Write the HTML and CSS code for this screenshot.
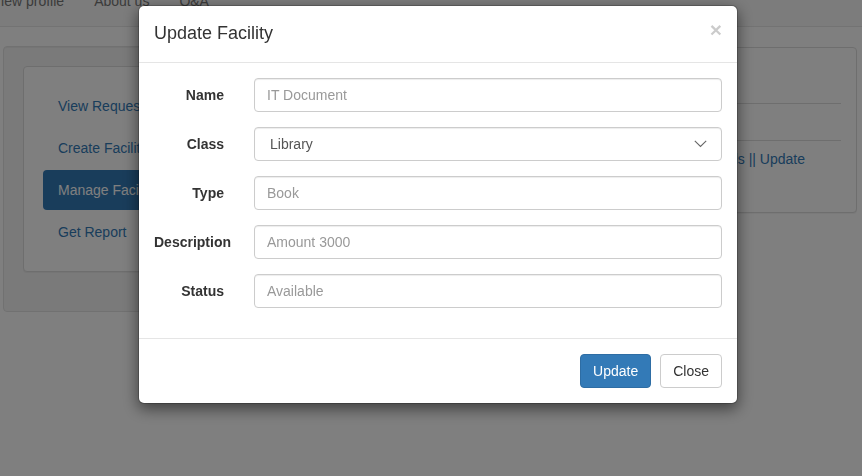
FILE: index.html
```html
<!DOCTYPE html>
<html lang="en">
<head>
<meta charset="utf-8">
<title>Manage Facility</title>
<link rel="stylesheet" href="styles.css">
</head>
<body>
<nav class="navbar">
  <ul class="nav-links">
    <li><a href="#">View profile</a></li>
    <li><a href="#">About us</a></li>
    <li><a href="#">Q&amp;A</a></li>
  </ul>
</nav>

<main class="layout">
  <aside class="well">
    <div class="side-panel">
      <ul class="pills">
        <li><a href="#">View Request</a></li>
        <li><a href="#">Create Facility</a></li>
        <li class="active"><a href="#">Manage Facility</a></li>
        <li><a href="#">Get Report</a></li>
      </ul>
    </div>
  </aside>
  <section class="content-panel">
    <table class="table">
      <thead>
        <tr><th>Name</th><th>Class</th><th class="col-action"></th></tr>
      </thead>
      <tbody>
        <tr><td>Facilities</td><td></td><td class="col-action"></td></tr>
        <tr><td>IT Document</td><td>Library</td><td class="col-action"><a href="#">Details || Update</a></td></tr>
      </tbody>
    </table>
  </section>
</main>

<div class="backdrop"></div>

<div class="modal">
  <div class="modal-header">
    <button class="close" type="button">&times;</button>
    <h4 class="modal-title">Update Facility</h4>
  </div>
  <div class="modal-body">
    <form class="form-horizontal">
      <div class="form-group">
        <label class="form-label">Name</label>
        <div class="form-field"><input class="form-control" type="text" placeholder="IT Document"></div>
      </div>
      <div class="form-group">
        <label class="form-label">Class</label>
        <div class="form-field select-wrap">
          <select class="form-control">
            <option>Library</option>
            <option>Laboratory</option>
          </select>
          <svg class="chevron" width="13" height="8" viewBox="0 0 13 8"><path d="M0.8 0.8 L6.5 6.5 L12.2 0.8" fill="none" stroke="#666" stroke-width="1.1"/></svg>
        </div>
      </div>
      <div class="form-group">
        <label class="form-label">Type</label>
        <div class="form-field"><input class="form-control" type="text" placeholder="Book"></div>
      </div>
      <div class="form-group">
        <label class="form-label">Description</label>
        <div class="form-field"><input class="form-control" type="text" placeholder="Amount 3000"></div>
      </div>
      <div class="form-group">
        <label class="form-label">Status</label>
        <div class="form-field"><input class="form-control" type="text" placeholder="Available"></div>
      </div>
    </form>
  </div>
  <div class="modal-footer">
    <button class="btn btn-primary" type="button">Update</button>
    <button class="btn btn-default" type="button">Close</button>
  </div>
</div>
</body>
</html>
```

FILE: styles.css
```css
* { box-sizing: border-box; }
html, body { margin: 0; padding: 0; }
body {
  font-family: "Liberation Sans", Arial, sans-serif;
  font-size: 14px;
  line-height: 20px;
  color: #333;
  background: #fff;
  overflow: hidden;
}
a { color: #337ab7; text-decoration: none; }

/* navbar (page scrolled slightly) */
.navbar {
  margin-top: -24px;
  height: 51px;
  background: #f8f8f8;
  border-bottom: 1px solid #e7e7e7;
  margin-bottom: 19px;
}
.nav-links {
  list-style: none;
  margin: 0 0 0 -23px;
  padding: 0;
  display: flex;
}
.nav-links a {
  display: block;
  padding: 15px;
  color: #777;
}

/* layout */
.layout {
  display: grid;
  grid-template-columns: 300px 1fr;
  column-gap: 20px;
  align-items: start;
  padding: 0 5px 0 3px;
}
.well {
  background: #f5f5f5;
  border: 1px solid #e3e3e3;
  border-radius: 4px;
  box-shadow: inset 0 1px 1px rgba(0,0,0,.05);
  padding: 19px;
}
.side-panel {
  background: #fff;
  border: 1px solid #ddd;
  border-radius: 4px;
  box-shadow: 0 1px 1px rgba(0,0,0,.05);
  padding: 19px;
  margin-bottom: 20px;
}
.pills { list-style: none; margin: 0; padding: 0; }
.pills li + li { margin-top: 2px; }
.pills a {
  display: block;
  padding: 10px 15px;
  border-radius: 4px;
}
.pills .active a { background: #337ab7; color: #fff; }

.content-panel {
  margin-top: 1px;
  background: #fff;
  border: 1px solid #ddd;
  border-radius: 4px;
  box-shadow: 0 1px 1px rgba(0,0,0,.05);
  padding: 15px;
}
.table { width: 100%; border-collapse: collapse; margin-bottom: 20px; }
.table th {
  text-align: left;
  padding: 12px 8px 8px;
  border-bottom: 1px solid #ddd;
}
.table td { padding: 8px; text-align: left; }
.table tbody tr + tr td { border-top: 1px solid #ddd; }
.table .col-action { width: 147px; }

/* backdrop */
.backdrop {
  position: fixed;
  inset: 0;
  background: rgba(0,0,0,.5);
}

/* modal */
.modal {
  position: fixed;
  left: 138px;
  top: 5px;
  width: 600px;
  background: #fff;
  border: 1px solid rgba(0,0,0,.2);
  border-radius: 6px;
  box-shadow: 0 5px 15px rgba(0,0,0,.5);
  background-clip: padding-box;
}
.modal-header {
  padding: 15px;
  border-bottom: 1px solid #e5e5e5;
}
.modal-title {
  margin: 0;
  font-size: 18px;
  font-weight: 500;
  line-height: 25.7px;
  color: #333;
}
.close {
  float: right;
  margin-top: -2px;
  padding: 0;
  border: 0;
  background: transparent;
  font-family: "Liberation Sans", Arial, sans-serif;
  font-size: 21px;
  font-weight: 700;
  line-height: 1;
  color: #000;
  opacity: .2;
  text-shadow: 0 1px 0 #fff;
}
.modal-body { padding: 15px; }
.form-horizontal { margin: 0 -15px; }
.form-group {
  display: grid;
  grid-template-columns: 100px 1fr;
  margin-bottom: 15px;
}
.form-label {
  padding: 7px 15px 0;
  text-align: right;
  font-weight: 700;
}
.form-field { padding: 0 15px; position: relative; }
.form-control {
  display: block;
  width: 100%;
  height: 34px;
  padding: 6px 12px;
  font-family: "Liberation Sans", Arial, sans-serif;
  font-size: 14px;
  line-height: 20px;
  color: #555;
  background: #fff;
  border: 1px solid #ccc;
  border-radius: 4px;
  box-shadow: inset 0 1px 1px rgba(0,0,0,.075);
  outline: none;
}
.form-control::placeholder { color: #999; opacity: 1; }
select.form-control {
  appearance: none;
  -webkit-appearance: none;
  padding-left: 15px;
}
.chevron {
  position: absolute;
  right: 30px;
  top: 13px;
  pointer-events: none;
}
.modal-footer {
  padding: 15px;
  border-top: 1px solid #e5e5e5;
  display: flex;
  justify-content: flex-end;
  gap: 9px;
}
.btn {
  display: inline-block;
  height: 34px;
  padding: 6px 12px;
  font-family: "Liberation Sans", Arial, sans-serif;
  font-size: 14px;
  line-height: 20px;
  border: 1px solid transparent;
  border-radius: 4px;
}
.btn-primary { background: #337ab7; border-color: #2e6da4; color: #fff; }
.btn-default { background: #fff; border-color: #ccc; color: #333; }
```
